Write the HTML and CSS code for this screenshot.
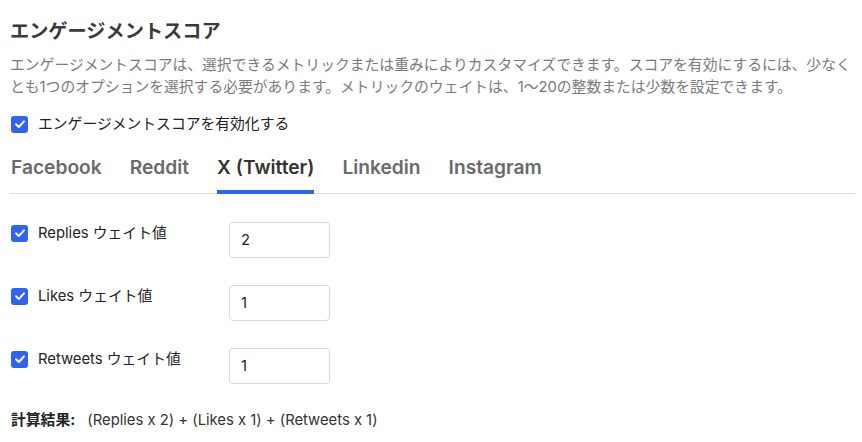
FILE: index.html
```html
<!DOCTYPE html>
<html lang="ja">
<head>
<meta charset="utf-8">
<link rel="stylesheet" href="styles.css">
</head>
<body>
<div class="page">
  <h1 class="title">エンゲージメントスコア</h1>
  <p class="desc">エンゲージメントスコアは、選択できるメトリックまたは重みによりカスタマイズできます。スコアを有効にするには、少なくとも1つのオプションを選択する必要があります。メトリックのウェイトは、1〜20の整数または少数を設定できます。</p>
  <label class="check-row">
    <span class="box"><svg viewBox="0 0 16 16" width="16" height="16"><path d="M4 8.3 L6.8 11 L12 5.4" fill="none" stroke="#fff" stroke-width="2" stroke-linecap="round" stroke-linejoin="round"/></svg></span>
    <span class="check-text">エンゲージメントスコアを有効化する</span>
  </label>
  <div class="tabs">
    <div class="tab">Facebook</div>
    <div class="tab">Reddit</div>
    <div class="tab active">X (Twitter)</div>
    <div class="tab">Linkedin</div>
    <div class="tab">Instagram</div>
  </div>
  <div class="metrics">
    <div class="metric">
      <label class="metric-label">
        <span class="box"><svg viewBox="0 0 16 16" width="16" height="16"><path d="M4 8.3 L6.8 11 L12 5.4" fill="none" stroke="#fff" stroke-width="2" stroke-linecap="round" stroke-linejoin="round"/></svg></span>
        <span class="check-text">Replies ウェイト値</span>
      </label>
      <div class="input">2</div>
    </div>
    <div class="metric">
      <label class="metric-label">
        <span class="box"><svg viewBox="0 0 16 16" width="16" height="16"><path d="M4 8.3 L6.8 11 L12 5.4" fill="none" stroke="#fff" stroke-width="2" stroke-linecap="round" stroke-linejoin="round"/></svg></span>
        <span class="check-text">Likes ウェイト値</span>
      </label>
      <div class="input">1</div>
    </div>
    <div class="metric">
      <label class="metric-label">
        <span class="box"><svg viewBox="0 0 16 16" width="16" height="16"><path d="M4 8.3 L6.8 11 L12 5.4" fill="none" stroke="#fff" stroke-width="2" stroke-linecap="round" stroke-linejoin="round"/></svg></span>
        <span class="check-text">Retweets ウェイト値</span>
      </label>
      <div class="input">1</div>
    </div>
  </div>
  <p class="result"><strong>計算結果:</strong> (Replies x 2) + (Likes x 1) + (Retweets x 1)</p>
</div>
</body>
</html>
```
FILE: styles.css
```css
html, body {
  margin: 0;
  padding: 0;
  background: #fff;
}
body {
  font-family: Inter, "Noto Sans CJK JP", sans-serif;
  color: #333;
}
.page {
  width: 845px;
  padding: 16px 0 0 10px;
}
.title {
  margin: 0;
  font-size: 19.2px;
  line-height: 30px;
  font-weight: 700;
  color: #3a3a3a;
}
.desc {
  margin: 8px 0 0;
  font-size: 14.8px;
  line-height: 22px;
  color: #7a7a7a;
}
.check-row {
  margin-top: 15px;
  display: flex;
  align-items: center;
  gap: 10px;
  height: 22px;
  padding-left: 1px;
}
.box {
  width: 17px;
  height: 17px;
  border-radius: 3px;
  background: #2f62f5;
  display: flex;
  align-items: center;
  justify-content: center;
  flex: none;
}
.check-text {
  font-size: 14.8px;
  line-height: 22px;
  color: #222;
}
.tabs {
  margin-top: 20px;
  display: flex;
  gap: 28px;
  border-bottom: 1px solid #dcdcdc;
  padding-left: 1px;
}
.tab {
  font-size: 19.2px;
  font-weight: 600;
  line-height: 24px;
  color: #6a6a6a;
  padding-bottom: 11px;
  border-bottom: 4px solid transparent;
  margin-bottom: -1px;
}
.tab.active {
  color: #333;
  border-bottom-color: #2f62f5;
}
.metrics {
  margin-top: 28px;
  display: flex;
  flex-direction: column;
  gap: 27px;
}
.metric {
  display: flex;
  align-items: flex-start;
}
.metric-label {
  width: 218px;
  display: flex;
  align-items: center;
  gap: 10px;
  padding-left: 1px;
  height: 22px;
}
.input {
  width: 88px;
  height: 34px;
  border: 1px solid #d8d8d8;
  border-radius: 4px;
  padding: 0 0 0 11px;
  display: flex;
  align-items: center;
  font-size: 14.8px;
  color: #222;
}
.result {
  margin: 25px 0 0;
  padding-left: 1px;
  font-size: 14.8px;
  line-height: 22px;
  color: #333;
}
.result strong {
  font-weight: 700;
  color: #222;
  margin-right: 8px;
}
```
